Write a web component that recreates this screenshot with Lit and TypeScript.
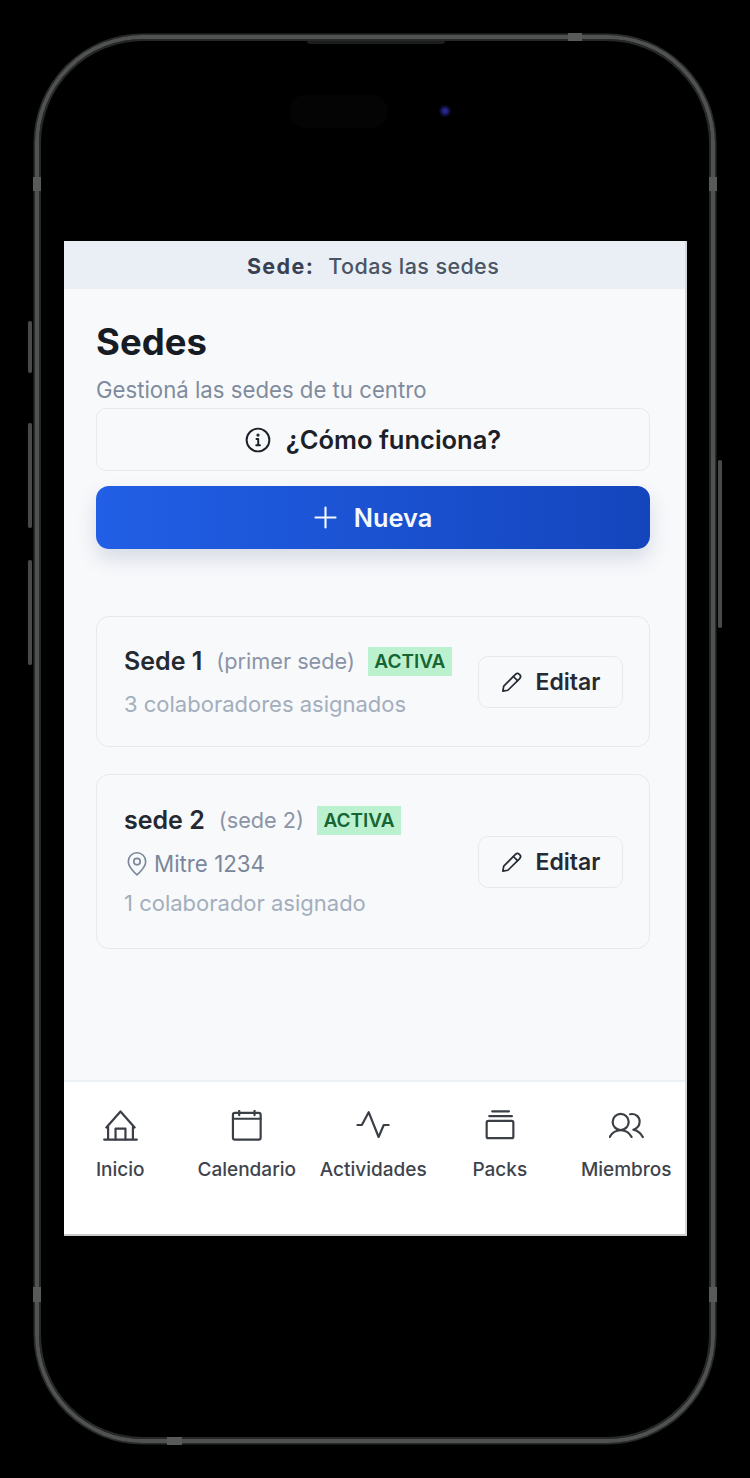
import { LitElement, html, css, svg } from "lit";
import { customElement } from "lit/decorators.js";

const ic = (w: number, sw: number, body: unknown) => html`<svg width=${w} height=${w} viewBox="0 0 24 24" fill="none" stroke="currentColor" stroke-width=${sw} stroke-linecap="round" stroke-linejoin="round">${body}</svg>`;

const info = svg`<circle cx="12" cy="12" r="10.500"/><path d="M10.600 11h1.600v5.600M10.400 16.800h3.400"/><circle cx="12" cy="7.400" r=".6" fill="currentColor"/>`;
const plus = svg`<path d="M12 1.500v21M1.500 12h21"/>`;
const pencil = svg`<path d="M2 22l1-5.500L15.800 3.600a3 3 0 0 1 4.200 0l.4.4a3 3 0 0 1 0 4.200L7.500 21z"/><path d="M13.500 6l4.500 4.500"/>`;
const pin = svg`<path d="M12 22s-8-6.600-8-12.400A8 8 0 0 1 20 9.600C20 15.400 12 22 12 22z"/><circle cx="12" cy="9.800" r="3"/>`;
const home = svg`<path d="M.8 20.300h22.400M3.500 20.300V11.500M20.500 20.300V11.500M2.300 12 12 1l9.700 11"/><path d="M8.600 20.300v-7.500h6.800v7.500"/>`;
const calendar = svg`<rect x="2.700" y="2" width="19" height="18.300" rx="1.300"/><path d="M2.700 6h19M7 .6v3M17.500 .6v3"/>`;
const activity = svg`<path d="M1 10.300h3L8.700 1.500l6.800 17L19 10.300h3.400"/>`;
const packs = svg`<path d="M7 .9h11.500M5 4.200h15.500"/><rect x="3.200" y="7.500" width="18.300" height="11.800" rx="1.200"/>`;
const members = svg`<circle cx="8" cy="8.200" r="5.500"/><path d="M.5 18.500c1.500-2.800 4-4.600 7.500-4.600s6 1.800 7.500 4.600"/><path d="M14.500 2.900c3.500-.7 6.500 1.500 6.500 5 0 2.800-1.800 4.800-4.300 5.600 2.800.6 5 2.400 6.500 5"/>`;

const tabs = [["Inicio", home], ["Calendario", calendar], ["Actividades", activity], ["Packs", packs], ["Miembros", members]] as const;

@customElement("app-root")
export class AppRoot extends LitElement {
  static styles = css`
    :host { display: block; width: 750px; height: 1478px; background: #000; overflow: hidden; font-family: Inter, "Liberation Sans", sans-serif; box-sizing: border-box; padding-top: 35px; }
    * { box-sizing: border-box; }
    .phone { position: relative; width: 680px; height: 1408px; margin-left: 35px; padding: 202px 0 0 25px; border: 4px solid #505252; border-radius: 108px; box-shadow: inset 0 0 0 2px #272929, 0 0 0 1.500px #2a2c2c; filter: blur(.45px); }
    .side { position: absolute; width: 4px; background: #484a4a; border-radius: 2px; box-shadow: 0 0 1px #222; }
    .b1 { left: -11.500px; top: 282px; height: 52px; }
    .b2 { left: -11.500px; top: 384px; height: 105px; }
    .b3 { left: -11.500px; top: 521px; height: 105px; }
    .b4 { right: -10.500px; top: 421px; height: 168px; }
    .nub { position: absolute; background: #585a5a; }
    .n1, .n2 { width: 8px; height: 14px; top: 138px; }
    .n3, .n4 { width: 8px; height: 15px; top: 1248px; }
    .n1, .n3 { left: -6px; }
    .n2, .n4 { right: -6px; }
    .n5 { left: 529px; top: -6px; width: 14px; height: 8px; }
    .n6 { left: 128px; bottom: -6px; width: 15px; height: 8px; }
    .speaker { position: absolute; left: 268px; top: 2px; width: 138px; height: 3px; background: #1c1e1e; border-radius: 0 0 3px 3px; }
    .island { position: absolute; left: 250px; top: 56px; width: 99px; height: 33px; border-radius: 17px; background: #040404; }
    .cam { position: absolute; left: 400px; top: 66px; width: 12px; height: 12px; border-radius: 50%; background: radial-gradient(circle, #25258a 0 22%, #0b0b30 55%, #000 100%); }
    .screen { width: 623px; height: 995px; background: #f8f9fb; display: flex; flex-direction: column; overflow: hidden; border-right: 2px solid #d4d6d8; border-bottom: 2px solid #c9c9c9; }
    .bar { height: 48px; flex: none; background: #e9eff5; display: flex; align-items: center; justify-content: center; gap: 14px; padding: 1px 3px 0 0; font-size: 21.500px; letter-spacing: .4px; color: #4a5563; font-weight: 500; }
    .bar b { font-weight: 700; color: #374151; letter-spacing: 1.400px; }
    .main { flex: 1; padding: 28px 35px 0 32px; display: flex; flex-direction: column; }
    h1 { margin: 0; font-size: 36.500px; line-height: 50px; font-weight: 700; color: #171c24; }
    .sub { margin-top: 10px; font-size: 22.200px; line-height: 26px; color: #7f8b9d; }
    .how { margin-top: 5px; height: 63px; border: 1.500px solid #e6e9ee; border-radius: 10px; display: flex; align-items: center; justify-content: center; gap: 15px; font-size: 25.500px; font-weight: 600; color: #1c2129; }
    .new { margin-top: 15px; height: 63px; border-radius: 13px; background: linear-gradient(90deg, #215fe6, #1445bd); display: flex; align-items: center; justify-content: center; gap: 17px; font-size: 25.300px; line-height: 60px; font-weight: 600; color: #f4f8ff; box-shadow: 0 10px 20px rgba(40, 60, 110, .16); }
    .cards { margin-top: 67px; display: flex; flex-direction: column; gap: 27px; }
    .card { border: 1.500px solid #e6e9ee; border-radius: 13px; padding: 0 26px 0 27px; display: flex; align-items: center; justify-content: space-between; }
    .c1 { height: 131px; }
    .c2 { height: 175px; }
    .info { display: flex; flex-direction: column; }
    .c1 .info { padding-top: 2px; }
    .head { display: flex; align-items: center; }
    .name { font-size: 25px; font-weight: 600; color: #242932; }
    .alias { margin-left: 14px; font-size: 21.700px; color: #8a94a6; }
    .tag { margin-left: 13px; height: 29px; padding: 0 6.500px; background: #bbf1ce; display: flex; align-items: center; font-size: 19px; font-weight: 600; color: #166534; }
    .place { display: flex; align-items: center; gap: 4px; margin-top: 14px; font-size: 22.300px; line-height: 30px; color: #7a879a; }
    .count { margin-top: 13px; font-size: 22px; line-height: 30px; color: #a3aebd; }
    .c2 .count { margin-top: 9px; }
    .edit { width: 145px; height: 52px; flex: none; border: 1.500px solid #e6e9ee; border-radius: 10px; display: flex; align-items: center; justify-content: center; gap: 13px; font-size: 23px; font-weight: 600; color: #252a33; }
    .nav { height: 154px; flex: none; background: #fff; border-top: 2px solid #eef1f4; }
    .tabs { display: grid; grid-template-columns: repeat(5, 126.500px); margin-left: -7px; padding-top: 28px; }
    .tab { display: flex; flex-direction: column; align-items: center; gap: 13px; font-size: 19px; line-height: 24px; font-weight: 500; color: #3f444c; }
    .tab svg { color: #3a3e45; }
  `;

  private card(cls: string, name: string, alias: string, count: string, place?: string) {
    return html`<div class="card ${cls}">
      <div class="info">
        <div class="head"><span class="name">${name}</span><span class="alias">${alias}</span><span class="tag">ACTIVA</span></div>
        ${place ? html`<div class="place">${ic(26, 1.500, pin)}<span>${place}</span></div>` : ""}
        <div class="count">${count}</div>
      </div>
      <div class="edit">${ic(22, 1.900, pencil)}<span>Editar</span></div>
    </div>`;
  }

  render() {
    return html`<div class="phone">
      <i class="side b1"></i><i class="side b2"></i><i class="side b3"></i><i class="side b4"></i>
      <i class="nub n1"></i><i class="nub n2"></i><i class="nub n3"></i><i class="nub n4"></i><i class="nub n5"></i><i class="nub n6"></i>
      <i class="speaker"></i><i class="island"></i><i class="cam"></i>
      <div class="screen">
        <div class="bar"><b>Sede:</b><span>Todas las sedes</span></div>
        <div class="main">
          <h1>Sedes</h1>
          <div class="sub">Gestioná las sedes de tu centro</div>
          <div class="how">${ic(26, 1.800, info)}<span>¿Cómo funciona?</span></div>
          <div class="new">${ic(23, 2.200, plus)}<span>Nueva</span></div>
          <div class="cards">
            ${this.card("c1", "Sede 1", "(primer sede)", "3 colaboradores asignados")}
            ${this.card("c2", "sede 2", "(sede 2)", "1 colaborador asignado", "Mitre 1234")}
          </div>
        </div>
        <div class="nav"><div class="tabs">
          ${tabs.map(([t, i]) => html`<div class="tab">${ic(35, 1.500, i)}<span>${t}</span></div>`)}
        </div></div>
      </div>
    </div>`;
  }
}
